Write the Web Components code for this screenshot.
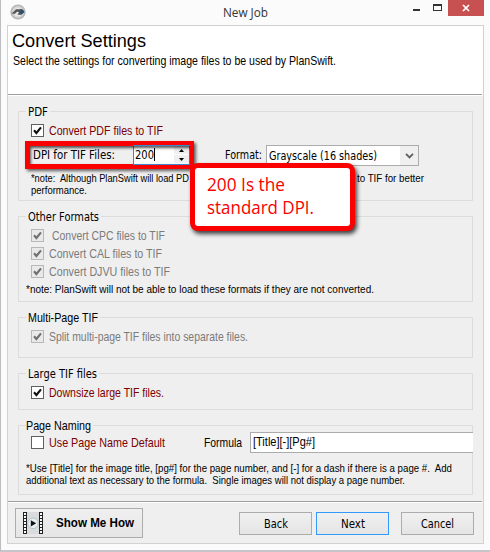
<!DOCTYPE html>
<html lang="en">
<head>
<meta charset="utf-8">
<title>New Job</title>
<style>
html,body{margin:0;padding:0;width:490px;height:552px;overflow:hidden;font-family:"Liberation Sans",sans-serif}
</style>
</head>
<body>
<job-window></job-window>
<script>
const define = (name, html, setup) => {
  const tpl = document.createElement('template');
  tpl.innerHTML = html;
  customElements.define(name, class extends HTMLElement {
    connectedCallback() {
      if (this.shadowRoot) return;
      this.attachShadow({mode: 'open'}).append(tpl.content.cloneNode(true));
      if (setup) setup(this, this.shadowRoot);
    }
  });
};

/* One line of text, condensed or widened to a given width. */
define('ui-text', `<style>
:host{display:block;white-space:pre;line-height:16px;height:16px;font-size:13px;width:max-content;flex:none}
:host([face=ui]){font-family:"DejaVu Sans",sans-serif;font-size:12px}
:host([face=note]){font-size:11px;line-height:12px;height:12px}
:host([face=segoe]){font-family:"Open Sans",sans-serif;font-size:12px}
:host([face=call]){font-family:"Open Sans",sans-serif;font-size:18px;line-height:23px;height:23px}
:host([face=head]){font-size:17.5px;line-height:20px;height:20px}
:host([face=strong]){font-weight:bold;font-size:12.5px}
span{display:inline-block;transform-origin:0 0}
</style><span><slot></slot></span>`, (el, root) => {
  const w = +el.getAttribute('w'), s = root.querySelector('span');
  if (!w) return;
  s.style.transform = 'scaleX(' + (w / s.getBoundingClientRect().width).toFixed(4) + ')';
  el.style.width = w + 'px';
});

define('check-box', `<style>
:host{display:flex;height:13px;align-items:center;color:#7b0000}
i{box-sizing:border-box;width:13px;height:13px;border:1px solid #606060;background:#fff;flex:none;display:block}
svg{display:none;width:11px;height:11px}
:host([checked]) svg{display:block}
path{fill:none;stroke:#111;stroke-width:2.1}
:host([disabled]){color:#7b7b7b}
:host([disabled]) i{border-color:#b8b8b8;background:#e9e9e9}
:host([disabled]) path{stroke:#707070}
slot{display:block;margin-left:5px}
</style><i><svg viewBox="0 0 11 11"><path d="M2 5.2 4.4 8 9 2.4"/></svg></i><slot></slot>`);

define('group-box', `<style>
:host{display:flex;flex-direction:column;box-sizing:border-box;border:1px solid #dcdcdc;position:relative;width:455px;margin-left:10px;flex:none}
.l{position:absolute;top:-8px;left:7px;background:#efefef;padding:0 2px 0 var(--in,2px)}
</style><div class="l"><slot name="label"></slot></div><slot></slot>`);

define('push-button', `<style>
:host{box-sizing:border-box;display:flex;align-items:center;justify-content:center;width:73px;height:23px;border:1px solid #acacac;background:linear-gradient(#f0f0f0,#e5e5e5);flex:none}
:host([primary]){border-color:#3399ff}
</style><slot></slot>`);

define('number-spin', `<style>
:host{display:flex;box-sizing:border-box;width:57px;height:20px;border:1px solid #3f84d0;background:#fff;color:#000;flex:none}
.t{display:flex;margin:1px 0 0 1px}
.c{width:1px;height:13px;background:#000;margin:1px 0 0}
.s{margin-left:auto;display:flex;flex-direction:column;gap:1px;width:15px}
b{height:8px;background:#efefef;display:flex;align-items:center;justify-content:center}
svg{width:5px;height:3px}
</style><div class="t"><slot></slot><span class="c"></span></div>
<div class="s"><b><svg viewBox="0 0 5 3"><path d="M0 3 2.5 0 5 3Z"/></svg></b><b><svg viewBox="0 0 5 3"><path d="M0 0 2.5 3 5 0Z"/></svg></b></div>`);

define('drop-down', `<style>
:host{display:flex;box-sizing:border-box;width:153px;height:21px;border:1px solid #acacac;background:#fff}
.a{margin-left:auto;width:18px;background:#efefef;display:flex;align-items:center;justify-content:center}
slot{display:block;margin:2px 0 0 2px}
path{fill:none;stroke:#606060;stroke-width:1.9}
</style><slot></slot><div class="a"><svg width="9" height="6" viewBox="0 0 9 6"><path d="M1 .8 4.5 4.3 8 .8"/></svg></div>`);

define('red-frame', `<style>
:host{display:flex;position:relative;box-sizing:border-box;width:169px;height:28px;border:5px solid #fb0000;border-width:5px 4px 5px 5px;box-shadow:2px 2px 3px #0009;padding:0 0 0 3px}
:host::after{content:"";position:absolute;inset:0;box-shadow:inset 1px 2px 3px #000a}
</style><slot></slot>`);

define('call-out', `<style>
:host{position:absolute;left:189px;top:163px;box-sizing:border-box;width:165px;height:68px;border:5px solid #fb0000;border-radius:8px;background:#fff;color:#fb0000;box-shadow:2px 3px 4px #000b;padding:5px 0 0 12px}
</style><slot></slot>`);

define('title-bar', `<style>
:host{display:flex;height:25px;color:#333;flex:none}
.i{margin:4px 0 0 9px;width:16px;height:16px}
ui-text{margin:5px 0 0 197px}
.m{width:7px;height:2px;background:#333;margin:9px 0 0 145px}
.x{box-sizing:border-box;width:9px;height:7px;border:1px solid #333;border-top-width:2px;margin:4px 0 0 13px}
.c{width:36px;height:16px;background:#c75050;margin-left:auto;margin-right:6px;display:flex;align-items:center;justify-content:center}
</style>
<svg class="i" viewBox="0 0 16 16"><defs><radialGradient id="g"><stop offset=".5" stop-color="#e8e8e8"/><stop offset="1" stop-color="#aaa"/></radialGradient></defs><circle cx="8" cy="8" r="7.6" fill="url(#g)"/><path d="M1.5 9.8 6 5.2h5.5L14 8l-3 2.8H7.5L9 8 7 7.7l-2 2.1Z" fill="#555"/><path d="m10 5.2 2.8.2L14.5 8l-3.3 2.8L9.7 9l1.2-1.4Z" fill="#27506f"/></svg>
<ui-text face="segoe" w="45">New Job</ui-text><span class="m"></span><span class="x"></span>
<div class="c"><svg width="8" height="8" viewBox="0 0 8 8"><path d="m1 1 6 6M7 1 1 7" stroke="#fff" stroke-width="1.7"/></svg></div>`);

define('wizard-header', `<style>
:host{display:flex;flex-direction:column;box-sizing:border-box;height:70px;background:#fff;flex:none}
div{height:68px;border-bottom:1px solid #a0a0a0;margin-right:1px;padding-left:4px}
</style><div><slot></slot></div>`);

define('film-icon', `<style>:host{display:block;width:20px;height:22px;flex:none}</style>
<svg width="20" height="22" viewBox="0 0 20 22"><rect width="20" height="22" rx="1.500" fill="#d9dbdc"/><path d="M2 0v22M18 0v22" stroke="#222" stroke-width="4"/><path d="M2 1v20.500M18 1v20.500" stroke="#fafafa" stroke-width="2" stroke-dasharray="2 1"/><circle cx="10" cy="11.300" r="5.300" fill="#e9eef0" stroke="#b4c4cc"/><path d="M7.800 8.200v6.200l5.400-3.100Z" fill="#111"/></svg>`);

define('job-window', `<style>
:host{display:flex;flex-direction:column;box-sizing:border-box;position:relative;width:490px;height:552px;background:#fbfbfb;border-left:1px solid #bdbdc1;border-bottom:2px solid #c6c6ca;color:#000}
main{display:flex;flex-direction:column;box-sizing:border-box;width:477px;height:519px;margin-left:6px;border:1px solid #d2d2d2;background:#efefef}
.row{display:flex}
.ft{border-top:1px solid #a0a0a0;box-shadow:inset 0 1px #fff;margin:6px 1px 0 0;display:flex;padding:6px 0 0 7px;align-items:flex-start}
.in{box-sizing:border-box;width:223px;height:21px;border:1px solid #acacac;border-right:0;background:#fff;padding:1px 0 0 2px}
</style>
<title-bar></title-bar>
<main>
<wizard-header><ui-text face="head" w="134" style="margin-top:5px">Convert Settings</ui-text><ui-text w="323" style="margin:2px 0 0 1px">Select the settings for converting image files to be used by PlanSwift.</ui-text></wizard-header>
<group-box style="margin-top:15px;height:90px">
  <ui-text face="ui" slot="label" w="20">PDF</ui-text>
  <check-box checked style="margin:12px 0 0 12px"><ui-text w="114">Convert PDF files to TIF</ui-text></check-box>
  <div class="row" style="margin:4px 0 0 6px"><red-frame><ui-text face="ui" w="82" style="margin-top:1px">DPI for TIF Files:</ui-text><number-spin style="margin-left:auto;margin-top:-1px"><ui-text face="ui" w="19">200</ui-text></number-spin></red-frame>
  <ui-text face="ui" w="37" style="margin:6px 0 0 31px">Format:</ui-text><drop-down style="margin:4px 0 0 4px"><ui-text face="ui" w="108">Grayscale (16 shades)</ui-text></drop-down></div>
  <div class="row" style="margin:3px 0 0 12px;justify-content:space-between;width:393px"><ui-text face="note" w="158">*note:  Although PlanSwift will load PD</ui-text><ui-text face="note" w="67">to TIF for better</ui-text></div>
  <ui-text face="note" w="56" style="margin-left:12px">performance.</ui-text>
</group-box>
<group-box style="margin-top:15px;height:86px">
  <ui-text face="ui" slot="label" w="71">Other Formats</ui-text>
  <check-box checked disabled style="margin:12px 0 0 12px"><ui-text w="113" style="margin-left:3px">Convert CPC files to TIF</ui-text></check-box>
  <check-box checked disabled style="margin:5px 0 0 12px"><ui-text w="113">Convert CAL files to TIF</ui-text></check-box>
  <check-box checked disabled style="margin:5px 0 0 12px"><ui-text w="121">Convert DJVU files to TIF</ui-text></check-box>
  <ui-text face="note" w="348" style="margin:5px 0 0 7px">*note: PlanSwift will not be able to load these formats if they are not converted.</ui-text>
</group-box>
<group-box style="margin-top:15px;height:41px">
  <ui-text slot="label" w="70">Multi-Page TIF</ui-text>
  <check-box checked disabled style="margin:12px 0 0 12px"><ui-text w="199">Split multi-page TIF files into separate files.</ui-text></check-box>
</group-box>
<group-box style="margin-top:15px;height:37px">
  <ui-text face="ui" slot="label" w="69">Large TIF files</ui-text>
  <check-box checked style="margin:12px 0 0 12px"><ui-text w="115">Downsize large TIF files.</ui-text></check-box>
</group-box>
<group-box style="margin-top:15px;height:70px;--in:0px">
  <ui-text slot="label" w="65">Page Naming</ui-text>
  <div class="row" style="margin-top:6px"><check-box style="margin:4px 0 0 12px"><ui-text w="116">Use Page Name Default</ui-text></check-box>
  <ui-text w="38" style="margin:3px 0 0 39px">Formula</ui-text><div class="in" style="margin-left:auto;margin-right:-1px"><ui-text w="62">[Title][-][Pg#]</ui-text></div></div>
  <ui-text face="note" w="426" style="margin:9px 0 0 7px">*Use [Title] for the image title, [pg#] for the page number, and [-] for a dash if there is a page #.  Add</ui-text>
  <ui-text face="note" w="379" style="margin-left:7px">additional text as necessary to the formula.  Single images will not display a page number.</ui-text>
</group-box>
<div class="ft"><push-button style="width:128px;height:30px;justify-content:flex-start;padding-left:7px"><film-icon></film-icon><ui-text face="strong" w="78" style="margin-left:13px">Show Me How</ui-text></push-button>
<push-button style="margin:4px 0 0 96px"><ui-text face="ui" w="24">Back</ui-text></push-button><push-button primary style="margin:4px 0 0 4px"><ui-text face="ui" w="24">Next</ui-text></push-button><push-button style="margin:4px 0 0 12px"><ui-text face="ui" w="33">Cancel</ui-text></push-button></div>
</main>
<call-out><ui-text face="call" w="78">200 Is the</ui-text><ui-text face="call" w="107">standard DPI.</ui-text></call-out>`);
</script>
</body>
</html>
